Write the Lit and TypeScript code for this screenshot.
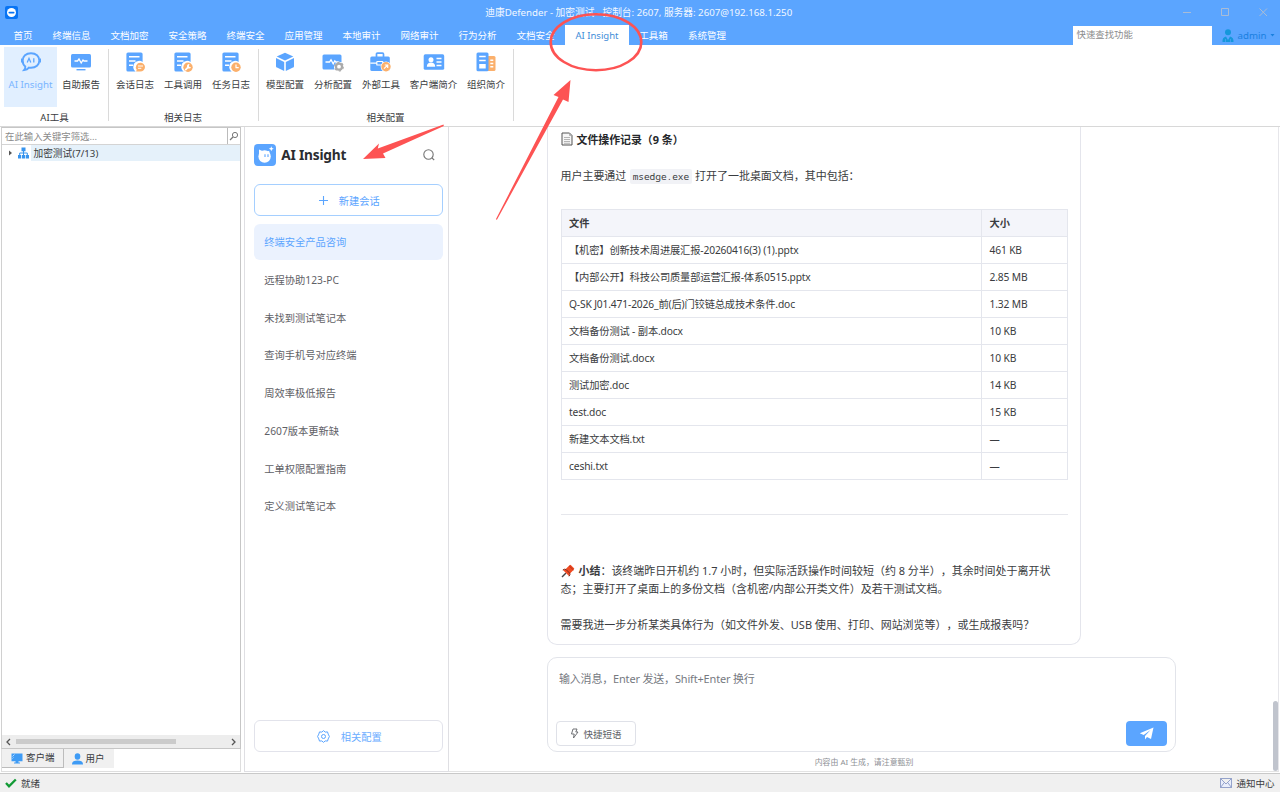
import { LitElement, html, css, svg, TemplateResult } from "lit";
import { customElement, state } from "lit/decorators.js";
import { classMap } from "lit/directives/class-map.js";

const BLUE = "#5ba5ff";
const ORANGE = "#fbb06c";

const docBase = svg`
  <path fill=${BLUE} d="M3 .5h13a1.6 1.6 0 0 1 1.600 1.600V10a5.600 5.600 0 0 0-7 9.500H3a1.600 1.600 0 0 1-1.600-1.600V2.100A1.600 1.600 0 0 1 3 .5z"/>
  <path stroke="#fff" stroke-width="1.400" d="M4 4.700h10.500M4 9h6.500M4 13.300h4"/>`;

const icons: Record<string, TemplateResult> = {
  ai: html`<svg viewBox="0 0 20 20" width="20" height="20" fill="none">
    <path d="M10 1.200c5 0 8.300 3.100 8.300 7.300s-3.300 7.300-8.300 7.300c-.8 0-1.500-.1-2.100-.2-1 1.300-2.500 2.200-4.700 2.400.8-.9 1.200-1.900 1.100-3.400C2.600 13.300 1.700 11.100 1.700 8.500c0-4.200 3.300-7.300 8.300-7.300z" stroke=${BLUE} stroke-width="1.900"/>
    <path d="M.5 6.500v4M19.500 6.500v4" stroke=${BLUE} stroke-width="1.300"/>
    <path d="M6.200 10.500 8 6.300l1.800 4.200M12.800 6.200v4.300" stroke=${BLUE} stroke-width="1.300"/></svg>`,
  report: html`<svg viewBox="0 0 20 20" width="20" height="20" fill="none">
    <rect x="0" y="2" width="20" height="13.500" rx="1.500" fill=${BLUE}/>
    <path d="M3.500 9h3l1.500-2 2.200 4 1.800-3 1 1h3.500" stroke="#fff" stroke-width="1.300"/>
    <path d="M5.500 17.700h9" stroke=${BLUE} stroke-width="1.400"/></svg>`,
  chatlog: html`<svg viewBox="0 0 20 20" width="20" height="20" fill="none">${docBase}
    <path fill=${ORANGE} d="M15.300 10.800a4.700 4.300 0 0 1 0 8.600h-4.200l.6-1.600a4.400 4.400 0 0 1 3.600-7z"/>
    <path stroke="#fff" stroke-width="1" d="M13 14h5M13 16.300h3.300"/></svg>`,
  toollog: html`<svg viewBox="0 0 20 20" width="20" height="20" fill="none">${docBase}
    <circle cx="15" cy="15.200" r="4.700" fill=${ORANGE}/>
    <path stroke="#fff" stroke-width="1.700" stroke-linecap="round" d="m12.700 17.600 2.500-2.500"/>
    <path fill="#fff" d="M16.600 12.200a2.200 2.200 0 1 0 1.500 3l-1.800-.3-.4-1.500z"/></svg>`,
  tasklog: html`<svg viewBox="0 0 20 20" width="20" height="20" fill="none">${docBase}
    <circle cx="15" cy="15.200" r="4.700" fill=${ORANGE}/>
    <path stroke="#fff" stroke-width="1.200" d="M15 12.500v3.200h2.700"/></svg>`,
  cube: html`<svg viewBox="0 0 20 20" width="20" height="20">
    <g fill=${BLUE}><path d="m10 .7 8.300 3.900L10 8.400 1.700 4.600z"/><path d="M1 6.100l8.200 3.800v9L2 15.600a1.500 1.500 0 0 1-1-1.400z"/><path d="M19 6.100l-8.200 3.800v9l7.200-3.300a1.500 1.500 0 0 0 1-1.400z"/></g></svg>`,
  analysis: html`<svg viewBox="0 0 22 20" width="22" height="20" fill="none">
    <path fill=${BLUE} d="M2 2.500h16A1.500 1.500 0 0 1 19.500 4v6.200a5.400 5.400 0 0 0-6.900 7.300H2A1.500 1.500 0 0 1 .5 16V4A1.500 1.500 0 0 1 2 2.500z"/>
    <path d="M3.500 10h4l1.500-2.200 2.200 4 1.600-3 1 1.200h3" stroke="#fff" stroke-width="1.300"/>
    <circle cx="17" cy="14.700" r="3" stroke="#aaa" stroke-width="2.200"/>
    <circle cx="17" cy="14.700" r="4.300" stroke="#aaa" stroke-width="1.200" stroke-dasharray="2.250"/></svg>`,
  toolbox: html`<svg viewBox="0 0 22 20" width="22" height="20" fill="none">
    <path d="M6.500 5V2.200q0-1 1-1h5q1 0 1 1V5" stroke=${BLUE} stroke-width="1.700"/>
    <rect x=".3" y="4.500" width="19.500" height="14.500" rx="1.500" fill=${BLUE}/>
    <path d="M.3 11.200h6.500M13 11.200h6" stroke="#fff" stroke-width="1.300"/><rect x="6.800" y="9.500" width="6" height="3.500" rx=".6" stroke="#fff" stroke-width="1.200"/>
    <circle cx="16" cy="14.700" r="5.300" fill="#fff"/><circle cx="16" cy="14.700" r="4.700" fill=${ORANGE}/>
    <path stroke="#fff" stroke-width="1.200" d="m14 16.700 3.600-3.600M14.800 13h2.900v3"/></svg>`,
  card: html`<svg viewBox="0 0 22 20" width="22" height="20">
    <rect x=".7" y="2.300" width="20.500" height="15.500" rx="1.600" fill=${BLUE}/>
    <circle cx="8" cy="7.700" r="2.500" fill="#fff"/><path fill="#fff" d="M3.800 14.700c0-3 1.900-4.200 4.200-4.200s4.200 1.200 4.200 4.200z"/>
    <path stroke="#fff" stroke-width="1.300" d="M13.500 6.500h5M13.500 10h5M13.500 13.500h5"/></svg>`,
  org: html`<svg viewBox="0 0 20 20" width="20" height="20">
    <path fill=${ORANGE} d="M12 4h6a1.500 1.500 0 0 1 1.500 1.500v12A1.500 1.500 0 0 1 18 19h-6z"/>
    <rect x=".5" y=".5" width="12" height="18.700" rx="1.500" fill=${BLUE}/>
    <path stroke="#fff" stroke-width="1.400" d="M3.200 4.500h6.500M3.200 8.500h6.500M14.300 8.300h3M14.300 11.500h3M14.300 14.700h3"/>
    <path fill="#fff" d="M3.200 12h6.500v4.500H3.200z"/></svg>`,
};

interface RibbonItem { icon: string; label: string; active?: boolean; wide?: boolean; }
interface RibbonGroup { label: string; items: RibbonItem[]; }

const groups: RibbonGroup[] = [
  { label: "AI工具", items: [{ icon: "ai", label: "AI Insight", active: true }, { icon: "report", label: "自助报告" }] },
  { label: "相关日志", items: [{ icon: "chatlog", label: "会话日志" }, { icon: "toollog", label: "工具调用" }, { icon: "tasklog", label: "任务日志" }] },
  { label: "相关配置", items: [
    { icon: "cube", label: "模型配置" }, { icon: "analysis", label: "分析配置" }, { icon: "toolbox", label: "外部工具" },
    { icon: "card", label: "客户端简介", wide: true }, { icon: "org", label: "组织简介" }] },
];

const baseText = css`
  * { box-sizing: border-box; }
  :host {
    font-family: "Noto Sans", "Noto Sans CJK SC", sans-serif;
    text-spacing-trim: space-all;
    white-space: nowrap;
    color: #3a3c40;
  }
  svg { display: block; flex: none; }
`;

@customElement("app-ribbon")
class AppRibbon extends LitElement {
  static styles = [baseText, css`
    :host { display: block; height: 127px; }
    .top { background: #5ba5ff; height: 45px; color: #fff; }
    .title { height: 25px; display: grid; grid-template-columns: 1fr auto 1fr; align-items: center; padding: 0 12.500px 1px 5px; font-size: 9.700px; color: #f2f8ff; }
    .caption { padding-left: 5px; }
    .controls { display: flex; justify-content: flex-end; gap: 28px; }
    .menu { height: 20px; display: flex; font-size: 9.500px; line-height: 21px; }
    .tab { width: 58px; text-align: center; }
    .home { width: 39px; margin-left: 3.500px; }
    .tool { width: 49px; }
    .current { width: 64px; margin-left: .500px; background: #fff; color: #3f8ed8; }
    .find { margin-left: auto; margin-top: 1px; width: 139px; height: 19px; background: #fff; color: #8b8b8b; padding-left: 4px; line-height: 18px; font-size: 9.400px; }
    .user { width: 68.500px; display: flex; align-items: center; padding-left: 10px; gap: 4px; color: #1a80df; font-size: 9.700px; }
    .ribbon { height: 82px; display: flex; border-bottom: 1px solid #d8d8d8; padding-left: 4px; font-size: 9.500px; background: #fff; }
    .group { display: flex; flex-direction: column; padding: 2px 2.500px 0 2.500px; }
    .group:first-child { padding-left: 0; }
    .rule { width: 1px; height: 72px; background: #dadada; margin-top: 4px; }
    .items { display: flex; }
    .item { width: 48px; height: 60px; display: flex; flex-direction: column; align-items: center; padding-top: 5px; gap: 5px; line-height: 16px; }
    .active { width: 53px; background: #e1efff; color: #79b5ff; font-size: 9.700px; }
    .wide { width: 57px; }
    .name { text-align: center; line-height: 22px; }
  `];

  render() {
    const tabs = ["终端信息", "文档加密", "安全策略", "终端安全", "应用管理", "本地审计", "网络审计", "行为分析", "文档安全"];
    return html`
      <div class="top">
        <div class="title">
          <svg width="13" height="13" viewBox="0 0 13 13"><rect width="13" height="13" rx="2" fill="#0874f4"/><circle cx="6.500" cy="6.500" r="4.500" fill="#fff"/><rect x="3.500" y="5.800" width="6" height="1.700" rx=".8" fill="#0874f4"/></svg>
          <span class="caption">迪康Defender - 加密测试 - 控制台: 2607, 服务器: 2607@192.168.1.250</span>
          <div class="controls">
            <svg width="10" height="10" viewBox="0 0 10 10"><path d="M1 5.500h8" stroke="#a9bcd6"/></svg>
            <svg width="10" height="10" viewBox="0 0 10 10"><path d="M1.500 1.500h7v7h-7z" fill="none" stroke="#a9bcd6"/></svg>
            <svg width="10" height="10" viewBox="0 0 10 10"><path d="m1.500 1.500 7.500 7.500m0-7.500L1.500 9" stroke="#a9bcd6"/></svg>
          </div>
        </div>
        <div class="menu">
          <span class="tab home">首页</span>
          ${tabs.map((t) => html`<span class="tab">${t}</span>`)}
          <span class="tab current">AI Insight</span>
          <span class="tab tool">工具箱</span>
          <span class="tab">系统管理</span>
          <div class="find">快速查找功能</div>
          <div class="user">
            <svg width="12" height="13" viewBox="0 0 12 13"><circle cx="6" cy="3.300" r="3" fill="#1597db"/><path fill="#1597db" d="M.5 13c-.3-3 1-5 3.500-5.500L6 11l2-3.500c2.500.5 3.800 2.500 3.500 5.500z"/><path stroke="#5ba5ff" stroke-width=".6" d="M3.500 10v3M8.500 10v3"/></svg>
            <span>admin</span>
            <svg width="5" height="3" viewBox="0 0 5 3"><path fill="#1a80df" d="M.5 0h4L2.500 2.500z"/></svg>
          </div>
        </div>
      </div>
      <div class="ribbon">
        ${groups.map((g) => html`
          <div class="group">
            <div class="items">
              ${g.items.map((i) => html`<div class=${classMap({ item: true, active: !!i.active, wide: !!i.wide })}>${icons[i.icon]}<span>${i.label}</span></div>`)}
            </div>
            <div class="name">${g.label}</div>
          </div><div class="rule"></div>`)}
      </div>`;
  }
}

@customElement("app-tree")
class AppTree extends LitElement {
  static styles = [baseText, css`
    :host { display: flex; flex-direction: column; width: 240px; height: 645px; margin-left: 1px; border: 1px solid #dedede; border-top: 0; font-size: 9.500px; }
    .box { height: 622px; border: 1px solid #c6c6c6; border-left-color: #d0d0d0; display: flex; flex-direction: column; margin: 0 -1px; }
    .filter { height: 17px; display: flex; border-bottom: 1px solid #d4d4d4; color: #8a8a8a; line-height: 17px; padding-left: 3px; font-size: 9.400px; }
    .go { margin-left: auto; width: 13px; border-left: 1px solid #bbb; display: flex; align-items: center; justify-content: center; }
    .node { display: flex; height: 16px; align-items: center; padding-left: 6px; }
    .node svg { margin-right: 5px; }
    .node span { flex: 1; background: #e5f1fa; line-height: 17px; height: 16px; padding-left: 2.500px; font-size: 9.700px; }
    .node .net { margin-right: 2px; }
    .scroll { height: 13px; margin-top: auto; background: #ededed; display: flex; align-items: center; padding: 0 3px; }
    .thumb { width: 160px; height: 5px; background: #cbcbcb; margin-left: 5px; margin-right: auto; }
    .tabs { display: flex; line-height: 18px; }
    .tab { display: flex; align-items: center; gap: 3px; background: #f0f0f0; height: 19px; width: 50px; padding-left: 8px; }
    .on { width: 61.500px; border-right: 1px solid #bcbcbc; border-bottom: 1px solid #bcbcbc; padding-left: 9px; }
  `];

  render() {
    return html`
      <div class="box">
        <div class="filter">在此输入关键字筛选...
          <div class="go"><svg width="10" height="10" viewBox="0 0 10 10"><circle cx="6" cy="4" r="2.600" fill="none" stroke="#777"/><path d="M4 6 1 9" stroke="#777" stroke-width="1.300"/></svg></div>
        </div>
        <div class="node">
          <svg width="5" height="8" viewBox="0 0 5 8"><path fill="#555" d="m1 1.500 3 2.500-3 2.500z"/></svg>
          <svg class="net" width="11" height="12" viewBox="0 0 11 12"><path stroke="#3794ee" fill="none" d="M5.500 3.500v5M1.700 8V6h7.600v2"/><path fill="#3794ee" d="M3.500.5h4v3.700h-4zM0 8h3.200v3.500H0zm4 0h3.200v3.500H4zm3.900 0H11v3.500H7.900z"/></svg>
          <span>加密测试(7/13)</span>
        </div>
        <div class="scroll">
          <svg width="6" height="8" viewBox="0 0 6 8"><path d="M5 1 2 4l3 3" fill="none" stroke="#555" stroke-width="1.300"/></svg>
          <div class="thumb"></div>
          <svg width="6" height="8" viewBox="0 0 6 8"><path d="m1 1 3 3-3 3" fill="none" stroke="#555" stroke-width="1.300"/></svg>
        </div>
      </div>
      <div class="tabs">
        <div class="tab on"><svg width="12" height="11" viewBox="0 0 12 11"><path fill="#3e9bf5" d="M.5.5h11v7.700h-4V9.500H9v1H3v-1h1.500V8.200h-4z"/><path stroke="#b9dcff" d="m1.500 3.500 2-2m-2 4 1-1"/></svg>客户端</div>
        <div class="tab"><svg width="11" height="12" viewBox="0 0 11 12"><ellipse cx="5.500" cy="3.500" rx="2.800" ry="3.300" fill="#3e9bf5"/><path fill="#3e9bf5" d="M0 11.500C0 8.500 2 7.500 5.500 7.500s5.500 1 5.500 4z"/></svg>用户</div>
      </div>`;
  }
}

@customElement("app-sessions")
class AppSessions extends LitElement {
  @state() private selected = 0;

  static styles = [baseText, css`
    :host { display: flex; flex-direction: column; width: 205px; height: 645px; margin-left: 3px; border: 1px solid #dfdfe3; border-top: 0; padding: 17px 5px 19px 9.300px; font-size: 10.250px; }
    .head { display: flex; align-items: center; height: 22px; gap: 5px; }
    .head b { font-size: 13.700px; line-height: 22px; letter-spacing: -0.220px; color: #2b2d31; flex: 1; }
    .find { margin-right: 7.700px; }
    .button { height: 32px; border: 1px solid #a5cfff; border-radius: 6px; display: flex; align-items: center; justify-content: center; gap: 11px; color: #5ba5ff; padding-left: 1px; }
    .new { margin: 18px 0 8px; }
    .config { border-color: #e2e3eb; margin-top: auto; color: #6badff; }
    .list { display: flex; flex-direction: column; gap: 1.750px; }
    .entry { height: 36px; line-height: 37.500px; padding-left: 10px; color: #5f6166; border-radius: 6px; }
    .chosen { background: #ebf2fe; color: #5ba5ff; }
  `];

  render() {
    const list = ["终端安全产品咨询", "远程协助123-PC", "未找到测试笔记本", "查询手机号对应终端", "周效率极低报告", "2607版本更新缺", "工单权限配置指南", "定义测试笔记本"];
    return html`
      <div class="head">
        <svg width="22" height="22" viewBox="0 0 22 22"><rect width="22" height="22" rx="4" fill="#5ba5ff"/><circle cx="10.600" cy="12.500" r="6.200" fill="#fff"/><path fill="#fff" d="M5 5.500 9.500 7.500 5 11zM13 7.500l2.200-.8.500 3.500zM17.300 2.200l.7 1.800 1.800.7-1.800.7-.7 1.800-.7-1.800-1.800-.7 1.800-.7z"/><path d="M11 10.300v2.800M14 10.300v2.800" stroke="#5ba5ff" stroke-width="1.100"/></svg>
        <b>AI Insight</b>
        <svg class="find" width="12" height="12" viewBox="0 0 12 12" fill="none" stroke="#777" stroke-width="1.100"><circle cx="5.500" cy="5.500" r="4.700"/><path d="m9 9 2.200 2"/></svg>
      </div>
      <div class="button new"><svg width="9" height="9" viewBox="0 0 9 9"><path d="M4.500 0v9M0 4.500h9" stroke="#5ba5ff" stroke-width="1.100"/></svg>新建会话</div>
      <div class="list">
        ${list.map((t, i) => html`<div class=${classMap({ entry: true, chosen: i === this.selected })} @click=${() => (this.selected = i)}>${t}</div>`)}
      </div>
      <div class="button config">
        <svg width="13" height="13" viewBox="0 0 13 13" fill="none" stroke="#5ba5ff"><path d="m6.500.6 1.700 1.500 2.300-.2.700 2.200 1.200 2.400-1.200 2.400-.7 2.200-2.300-.2-1.700 1.500-1.700-1.500-2.300.2-.7-2.200L.6 6.500l1.200-2.400.7-2.200 2.300.2z" stroke-linejoin="round"/><circle cx="6.500" cy="6.500" r="2"/></svg>相关配置
      </div>`;
  }
}

@customElement("app-chat")
class AppChat extends LitElement {
  static styles = [baseText, css`
    :host { display: flex; width: 830px; height: 645px; border-bottom: 1px solid #e3e3e3; border-right: 1px solid #e6e6ea; font-size: 10.970px; }
    .column { width: 629px; margin-left: 98px; display: flex; flex-direction: column; }
    .bubble { flex: none; width: 534px; height: 518px; border: 1px solid #e4e5ec; border-top: 0; border-radius: 0 0 10px 10px; padding: 2.500px 12px 0 12.500px; }
    .heading { display: flex; align-items: center; height: 18px; gap: 4px; font-weight: 700; color: #26282b; font-size: 10.900px; }
    .para { line-height: 18px; }
    .intro { margin: 19px 0 23.500px; }
    code { font-family: "Noto Sans Mono", "DejaVu Sans Mono", monospace; font-size: 9.500px; background: #f1f2f6; border-radius: 2px; padding: 1px 3px; margin-left: .500px; letter-spacing: -0.050px; }
    .table { display: grid; grid-template-columns: 420.500px 1fr; border: 1px solid #e4e6ed; border-width: 1px 0 0 1px; font-size: 10.250px; }
    .cell { height: 27.040px; border: 1px solid #e4e6ed; border-width: 0 1px 1px 0; padding-left: 7.500px; line-height: 27px; }
    .latin { letter-spacing: -0.150px; }
    .th { background: #f4f5fa; font-weight: 700; }
    .line { height: 1px; background: #e6e7ec; margin: 34px 0 47px; }
    .summary { display: flex; flex-direction: column; margin-bottom: 18px; }
    .first { display: flex; align-items: center; gap: 4px; }
    .composer { flex: none; height: 95px; margin-top: 12px; border: 1px solid #e2e4ea; border-radius: 10px; padding: 10.500px 8px 5px; display: flex; flex-direction: column; justify-content: space-between; color: #76797f; }
    .hint { padding-left: 3px; line-height: 20px; letter-spacing: -0.160px; }
    .actions { display: flex; justify-content: space-between; }
    .quick { width: 80px; height: 25px; border: 1px solid #dfe1e8; border-radius: 4px; display: flex; align-items: center; justify-content: center; gap: 4px; font-size: 9.500px; color: #606266; }
    .send { width: 41px; height: 25px; background: #5ba5ff; border-radius: 4px; display: flex; align-items: center; justify-content: center; }
    .note { text-align: center; color: #8e9095; font-size: 7.900px; line-height: 18px; margin-top: 1px; padding-left: 5px; }
    .bar { width: 5px; height: 70px; border-radius: 3px; background: #c0c4cd; margin: 574px 0 0 auto; }
  `];

  render() {
    const rows = [
      ["【机密】创新技术周进展汇报-20260416(3) (1).pptx", "461 KB"],
      ["【内部公开】科技公司质量部运营汇报-体系0515.pptx", "2.85 MB"],
      ["Q-SK J01.471-2026_前(后)门铰链总成技术条件.doc", "1.32 MB"],
      ["文档备份测试 - 副本.docx", "10 KB"],
      ["文档备份测试.docx", "10 KB"],
      ["测试加密.doc", "14 KB"],
      ["test.doc", "15 KB"],
      ["新建文本文档.txt", "—"],
      ["ceshi.txt", "—"],
    ];
    return html`
      <div class="column">
        <div class="bubble">
          <div class="heading"><svg width="12" height="14" viewBox="0 0 12 14"><path d="M1 1h7.500L11 3.500V13H1z" fill="#f6f6f6" stroke="#555"/><path d="M8.500 1v2.500H11M3 5.500h6M3 7.500h6M3 9.500h6M3 11.300h6" fill="none" stroke="#999" stroke-width=".7"/></svg>文件操作记录（9 条）</div>
          <div class="para intro">用户主要通过 <code>msedge.exe</code> 打开了一批桌面文档，其中包括：</div>
          <div class="table">
            <div class="cell th">文件</div><div class="cell th">大小</div>
            ${rows.map((r) => html`<div class="cell latin">${r[0]}</div><div class="cell latin">${r[1]}</div>`)}
          </div>
          <div class="line"></div>
          <div class="summary">
            <div class="para first"><svg width="14" height="14" viewBox="0 0 14 14"><path d="M5 9 1 13" stroke="#444" stroke-width="1.400"/><path d="M2 6 8 12 9 9.500 12.500 6 13.300 4.500 9.500.8 8 1.700 4.500 5.200z" fill="#f04a22"/><path d="M1.800 6q1.600-1.300 3.200-.5l3.700 3.700q.8 1.600-.7 3.100" fill="none" stroke="#7a2a1c"/><path d="m8 1.700 4.500 4.300" stroke="#a52f18" stroke-width=".8"/></svg><span><b>小结</b>：该终端昨日开机约 1.7 小时，但实际活跃操作时间较短（约 8 分半），其余时间处于离开状</span></div>
            <div class="para">态；主要打开了桌面上的多份文档（含机密/内部公开类文件）及若干测试文档。</div>
          </div>
          <div class="para">需要我进一步分析某类具体行为（如文件外发、USB 使用、打印、网站浏览等），或生成报表吗？</div>
        </div>
        <div class="composer">
          <div class="hint">输入消息，Enter 发送，Shift+Enter 换行</div>
          <div class="actions">
            <div class="quick"><svg width="9" height="11" viewBox="0 0 9 11"><path d="M3 1h4L5.800 4H8L3.500 10l.7-4H1.500z" fill="none" stroke="#606266" stroke-width=".9" stroke-linejoin="round"/></svg>快捷短语</div>
            <div class="send"><svg width="15" height="13" viewBox="0 0 15 13"><path fill="#fff" d="M14.500.5 12 12 8 10 6 12.500V9l5.500-6-6.800 5L.8 6.300z"/></svg></div>
          </div>
        </div>
        <div class="note">内容由 AI 生成，请注意甄别</div>
      </div>
      <div class="bar"></div>`;
  }
}

@customElement("app-root")
class AppRoot extends LitElement {
  static styles = [baseText, css`
    :host { display: block; width: 1280px; height: 792px; background: #fff; position: relative; overflow: hidden; }
    .main { display: flex; height: 645px; }
    .status { height: 20px; background: #f0f0f0; border-top: 1px solid #c9c9c9; border-bottom: 1px solid #6aaeff; display: flex; align-items: center; font-size: 9.500px; padding: 0 5.500px 0 5px; gap: 4px; margin-top: 1px; }
    .mail { margin-left: auto; }
    .marks { position: absolute; left: 0; top: 0; pointer-events: none; }
  `];

  render() {
    return html`
      <app-ribbon></app-ribbon>
      <div class="main"><app-tree></app-tree><app-sessions></app-sessions><app-chat></app-chat></div>
      <div class="status">
        <svg width="12" height="10" viewBox="0 0 12 10"><path d="m1 5 3 3.300L10.800 1.500" fill="none" stroke="#129a35" stroke-width="2.300"/></svg>就绪
        <svg class="mail" width="12" height="10" viewBox="0 0 12 10"><path d="M.5.500h11v9H.5zM.5.500 6 6 11.500.5M.5 9.500 4.300 4.500M11.500 9.500 7.700 4.500" fill="#e9eefb" stroke="#7d8fc0" stroke-width=".8"/></svg>通知中心
      </div>
      <svg class="marks" width="1280" height="792" viewBox="0 0 1280 792" fill="#fd5353">
        <ellipse cx="596" cy="42.200" rx="45.300" ry="28" fill="none" stroke="#fd5353" stroke-width="2.600"/>
        <path d="M570.500 80 553.500 95 558.500 97 496 219 496.800 220 563 99.500 568.500 102z"/>
        <path d="M443.500 124.500 377.800 148.500 379 143.500 363 159 385.500 158 383 153.500 443.800 126z"/>
      </svg>`;
  }
}
